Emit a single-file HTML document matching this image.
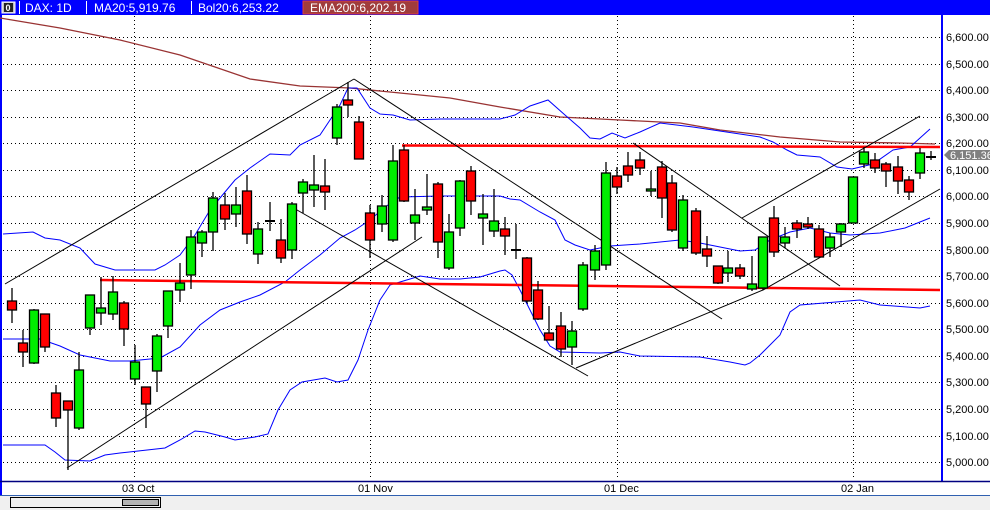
<!DOCTYPE html>
<html><head><meta charset="utf-8"><style>
html,body{margin:0;padding:0;background:#fff;width:990px;height:510px;overflow:hidden}
svg{display:block}
text{font-family:"Liberation Sans",sans-serif}
</style></head><body>
<svg width="990" height="510" viewBox="0 0 990 510" xmlns="http://www.w3.org/2000/svg">
<rect x="0" y="0" width="990" height="510" fill="#fff"/>
<!-- header -->
<rect x="0" y="0" width="990" height="15" fill="#0000ff"/>
<rect x="2" y="2" width="13" height="11" fill="#c0c0c0" stroke="#fff" stroke-width="1"/>
<rect x="4" y="3" width="9" height="9" fill="#222"/>
<text x="5.5" y="11" font-size="9" fill="#fff" font-weight="bold">0</text>
<line x1="19.5" y1="1" x2="19.5" y2="14" stroke="#fff"/>
<line x1="86.5" y1="1" x2="86.5" y2="14" stroke="#fff"/>
<line x1="191.5" y1="1" x2="191.5" y2="14" stroke="#fff"/>
<rect x="303" y="1" width="115" height="13" fill="#a03c3c" stroke="#e04040"/>
<text x="25" y="12" font-size="12" fill="#fff">DAX: 1D</text>
<text x="94" y="12" font-size="12" fill="#fff">MA20:5,919.76</text>
<text x="198" y="12" font-size="12" fill="#fff">Bol20:6,253.22</text>
<text x="310" y="12" font-size="12" fill="#fff">EMA200:6,202.19</text>
<!-- borders -->
<line x1="1" y1="15" x2="1" y2="495" stroke="#0000ff" stroke-width="2"/>
<line x1="942" y1="15" x2="942" y2="481" stroke="#0000ff" stroke-width="2"/>
<line x1="0" y1="481.5" x2="990" y2="481.5" stroke="#000080" stroke-width="1.5"/>
<rect x="0" y="495" width="990" height="15" fill="#f0f0f0"/>
<line x1="0" y1="495.5" x2="990" y2="495.5" stroke="#3060b0"/>
<rect x="10.5" y="497.5" width="150" height="10" fill="#f0f0f0" stroke="#000"/>
<rect x="122.5" y="499.5" width="36" height="6" fill="#b4b4b4" stroke="#000"/>
<!-- grid -->
<g stroke="#000" stroke-width="1" stroke-dasharray="1 3">
<line x1="3" y1="37.5" x2="940" y2="37.5"/><line x1="3" y1="64.5" x2="940" y2="64.5"/>
<line x1="3" y1="90.5" x2="940" y2="90.5"/><line x1="3" y1="117.5" x2="940" y2="117.5"/>
<line x1="3" y1="143.5" x2="940" y2="143.5"/><line x1="3" y1="170.5" x2="940" y2="170.5"/>
<line x1="3" y1="196.5" x2="940" y2="196.5"/><line x1="3" y1="223.5" x2="940" y2="223.5"/>
<line x1="3" y1="250.5" x2="940" y2="250.5"/><line x1="3" y1="276.5" x2="940" y2="276.5"/>
<line x1="3" y1="303.5" x2="940" y2="303.5"/><line x1="3" y1="329.5" x2="940" y2="329.5"/>
<line x1="3" y1="356.5" x2="940" y2="356.5"/><line x1="3" y1="382.5" x2="940" y2="382.5"/>
<line x1="3" y1="409.5" x2="940" y2="409.5"/><line x1="3" y1="436.5" x2="940" y2="436.5"/>
<line x1="3" y1="462.5" x2="940" y2="462.5"/>
<line x1="134.5" y1="16" x2="134.5" y2="480"/><line x1="370.5" y1="16" x2="370.5" y2="480"/>
<line x1="617.5" y1="16" x2="617.5" y2="480"/><line x1="853.5" y1="16" x2="853.5" y2="480"/>
</g>
<!-- axis labels -->
<g font-size="11" fill="#000">
<text x="946" y="41">6,600.00</text><text x="946" y="68">6,500.00</text><text x="946" y="94">6,400.00</text>
<text x="946" y="121">6,300.00</text><text x="946" y="147">6,200.00</text><text x="946" y="174">6,100.00</text>
<text x="946" y="200">6,000.00</text><text x="946" y="227">5,900.00</text><text x="946" y="254">5,800.00</text>
<text x="946" y="280">5,700.00</text><text x="946" y="307">5,600.00</text><text x="946" y="333">5,500.00</text>
<text x="946" y="360">5,400.00</text><text x="946" y="386">5,300.00</text><text x="946" y="413">5,200.00</text>
<text x="946" y="440">5,100.00</text><text x="946" y="466">5,000.00</text>
<text x="122" y="492">03 Oct</text><text x="358" y="492">01 Nov</text>
<text x="604" y="492">01 Dec</text><text x="841" y="492">02 Jan</text>
</g>
<polygon points="944,155 949,150 990,150 990,160 949,160" fill="#808080"/>
<text x="950" y="159" font-size="11" fill="#fff">6,151.36</text>
<!-- EMA -->
<polyline fill="none" stroke="#993333" stroke-width="1.3" points="0,18 60,28 120,40 180,55 250,79 300,86 350,88 400,93 450,98 500,107 560,117 620,120 680,123 720,130 780,137 840,142 900,143 935,144"/>
<!-- bands -->
<g fill="none" stroke="#0000ff" stroke-width="1">
<polyline points="3,234 33,232 45,238 60,240 80,248 95,264 115,270 155,270 165,265 180,255 195,235 210,210 225,192 235,180 250,168 270,154 290,155 300,145 320,135 330,120 340,105 348,88 357,88 370,108 380,114 393,115 410,120 440,119 500,119 515,115 530,106 548,100 565,115 580,128 590,138 600,139 612,133 625,138 640,132 660,123 693,127 760,137 773,142 787,150 797,155 820,157 837,167 852,169 873,164 893,150 910,147 920,138 930,129"/>
<polyline points="3,339 40,339 60,346 80,355 110,361 130,361 160,358 180,347 200,325 220,310 240,302 260,295 285,282 300,270 320,255 340,238 355,230 370,220 385,207 400,197 440,196 500,196 510,199 520,200 540,212 555,220 565,240 575,245 590,250 610,246 640,244 680,240 700,243 720,247 740,251 755,250 770,240 790,232 810,228 830,233 850,235 880,233 905,228 920,222 930,218"/>
<polyline points="3,445 45,445 55,452 65,460 90,461 105,455 120,453 165,448 180,440 195,431 205,432 225,437 235,440 255,437 268,434 278,410 290,390 302,382 325,378 337,382 348,380 358,360 368,330 380,300 390,285 400,282 420,276 440,279 460,279 480,277 500,271 505,270 512,275 520,290 530,310 540,330 550,346 560,352 600,353 620,352 640,356 700,357 730,362 745,365 750,363 760,355 770,345 780,335 790,312 800,305 860,300 880,305 920,308 930,306"/>
</g>
<!-- red lines -->
<line x1="402" y1="145.5" x2="940" y2="147" stroke="#ff0000" stroke-width="2.5"/>
<line x1="100" y1="280" x2="940" y2="290" stroke="#ff0000" stroke-width="2.5"/>
<!-- trend lines -->
<g stroke="#000" stroke-width="1" fill="none">
<line x1="5" y1="284" x2="354" y2="79"/>
<line x1="67" y1="468" x2="422" y2="237"/>
<line x1="354" y1="79" x2="722" y2="319"/>
<line x1="290" y1="206" x2="588" y2="376"/>
<polyline points="576,368 763,290 940,189"/>
<line x1="742" y1="218" x2="920" y2="116"/>
<line x1="633" y1="143" x2="840" y2="286"/>
</g>
<!-- candles -->
<g stroke="#000" stroke-width="1.3">
<line x1="12" y1="288" x2="12" y2="323"/><rect x="7.5" y="301" width="9" height="9" fill="#f00"/>
<line x1="23" y1="330" x2="23" y2="367"/><rect x="18.5" y="343" width="9" height="9" fill="#f00"/>
<line x1="34" y1="309" x2="34" y2="364"/><rect x="29.5" y="310" width="9" height="53" fill="#00ee00"/>
<line x1="45" y1="314" x2="45" y2="352"/><rect x="40.5" y="314" width="9" height="33" fill="#f00"/>
<line x1="56" y1="385" x2="56" y2="427"/><rect x="51.5" y="393" width="9" height="25" fill="#f00"/>
<line x1="68" y1="401" x2="68" y2="470"/><rect x="63.5" y="401" width="9" height="9" fill="#f00"/>
<line x1="79" y1="352" x2="79" y2="430"/><rect x="74.5" y="370" width="9" height="58" fill="#00ee00"/>
<line x1="90" y1="295" x2="90" y2="335"/><rect x="85.5" y="295" width="9" height="33" fill="#00ee00"/>
<line x1="101" y1="277" x2="101" y2="325"/><rect x="96.5" y="308" width="9" height="5" fill="#00ee00"/>
<line x1="113" y1="276" x2="113" y2="320"/><rect x="108.5" y="292" width="9" height="22" fill="#00ee00"/>
<line x1="124" y1="301" x2="124" y2="346"/><rect x="119.5" y="303" width="9" height="26" fill="#f00"/>
<line x1="135" y1="345" x2="135" y2="385"/><rect x="130.5" y="362" width="9" height="17" fill="#00ee00"/>
<line x1="146" y1="387" x2="146" y2="428"/><rect x="141.5" y="387" width="9" height="17" fill="#f00"/>
<line x1="157" y1="334" x2="157" y2="392"/><rect x="152.5" y="336" width="9" height="35" fill="#00ee00"/>
<line x1="168" y1="291" x2="168" y2="338"/><rect x="163.5" y="291" width="9" height="35" fill="#00ee00"/>
<line x1="180" y1="263" x2="180" y2="302"/><rect x="175.5" y="283" width="9" height="7" fill="#00ee00"/>
<line x1="191" y1="230" x2="191" y2="289"/><rect x="186.5" y="237" width="9" height="38" fill="#00ee00"/>
<line x1="202" y1="230" x2="202" y2="257"/><rect x="197.5" y="232" width="9" height="11" fill="#00ee00"/>
<line x1="213" y1="192" x2="213" y2="251"/><rect x="208.5" y="198" width="9" height="34" fill="#00ee00"/>
<line x1="225" y1="193" x2="225" y2="230"/><rect x="220.5" y="205" width="9" height="14" fill="#f00"/>
<line x1="236" y1="187" x2="236" y2="227"/><rect x="231.5" y="205" width="9" height="9" fill="#00ee00"/>
<line x1="247" y1="175" x2="247" y2="244"/><rect x="242.5" y="191" width="9" height="43" fill="#f00"/>
<line x1="258" y1="222" x2="258" y2="264"/><rect x="253.5" y="229" width="9" height="25" fill="#00ee00"/>
<line x1="270" y1="202" x2="270" y2="231"/><line x1="265" y1="221" x2="275" y2="221" stroke-width="2"/>
<line x1="281" y1="219" x2="281" y2="263"/><rect x="276.5" y="240" width="9" height="18" fill="#f00"/>
<line x1="292" y1="202" x2="292" y2="259"/><rect x="287.5" y="204" width="9" height="46" fill="#00ee00"/>
<line x1="303" y1="179" x2="303" y2="213"/><rect x="298.5" y="182" width="9" height="11" fill="#00ee00"/>
<line x1="314" y1="155" x2="314" y2="207"/><rect x="309.5" y="185" width="9" height="5" fill="#00ee00"/>
<line x1="325" y1="159" x2="325" y2="210"/><rect x="320.5" y="186" width="9" height="6" fill="#f00"/>
<line x1="337" y1="104" x2="337" y2="145"/><rect x="332.5" y="107" width="9" height="31" fill="#00ee00"/>
<line x1="348" y1="82" x2="348" y2="117"/><rect x="343.5" y="100" width="9" height="5" fill="#f00"/>
<line x1="359" y1="116" x2="359" y2="159"/><rect x="354.5" y="122" width="9" height="37" fill="#f00"/>
<line x1="370" y1="205" x2="370" y2="258"/><rect x="365.5" y="213" width="9" height="27" fill="#f00"/>
<line x1="382" y1="195" x2="382" y2="232"/><rect x="377.5" y="206" width="9" height="18" fill="#00ee00"/>
<line x1="393" y1="145" x2="393" y2="242"/><rect x="388.5" y="161" width="9" height="79" fill="#00ee00"/>
<line x1="404" y1="145" x2="404" y2="202"/><rect x="399.5" y="150" width="9" height="51" fill="#f00"/>
<line x1="415" y1="189" x2="415" y2="240"/><rect x="410.5" y="215" width="9" height="8" fill="#00ee00"/>
<line x1="427" y1="174" x2="427" y2="215"/><rect x="422.5" y="207" width="9" height="3" fill="#00ee00"/>
<line x1="438" y1="182" x2="438" y2="258"/><rect x="433.5" y="184" width="9" height="58" fill="#f00"/>
<line x1="449" y1="214" x2="449" y2="270"/><rect x="444.5" y="232" width="9" height="36" fill="#00ee00"/>
<line x1="460" y1="180" x2="460" y2="236"/><rect x="455.5" y="181" width="9" height="47" fill="#00ee00"/>
<line x1="471" y1="166" x2="471" y2="215"/><rect x="466.5" y="171" width="9" height="30" fill="#f00"/>
<line x1="483" y1="194" x2="483" y2="245"/><rect x="478.5" y="214" width="9" height="4" fill="#00ee00"/>
<line x1="494" y1="189" x2="494" y2="237"/><rect x="489.5" y="221" width="9" height="10" fill="#00ee00"/>
<line x1="505" y1="217" x2="505" y2="255"/><rect x="500.5" y="229" width="9" height="7" fill="#f00"/>
<line x1="516" y1="224" x2="516" y2="259"/><line x1="511" y1="250" x2="521" y2="250" stroke-width="2"/>
<line x1="527" y1="257" x2="527" y2="303"/><rect x="522.5" y="258" width="9" height="43" fill="#f00"/>
<line x1="538" y1="281" x2="538" y2="320"/><rect x="533.5" y="290" width="9" height="29" fill="#f00"/>
<line x1="549" y1="306" x2="549" y2="340"/><rect x="544.5" y="333" width="9" height="7" fill="#f00"/>
<line x1="561" y1="312" x2="561" y2="357"/><rect x="556.5" y="326" width="9" height="23" fill="#f00"/>
<line x1="572" y1="321" x2="572" y2="365"/><rect x="567.5" y="331" width="9" height="16" fill="#00ee00"/>
<line x1="583" y1="262" x2="583" y2="311"/><rect x="578.5" y="265" width="9" height="44" fill="#00ee00"/>
<line x1="595" y1="245" x2="595" y2="280"/><rect x="590.5" y="251" width="9" height="19" fill="#00ee00"/>
<line x1="606" y1="162" x2="606" y2="270"/><rect x="601.5" y="173" width="9" height="92" fill="#00ee00"/>
<line x1="617" y1="167" x2="617" y2="194"/><rect x="612.5" y="176" width="9" height="11" fill="#f00"/>
<line x1="628" y1="152" x2="628" y2="182"/><rect x="623.5" y="166" width="9" height="9" fill="#f00"/>
<line x1="640" y1="152" x2="640" y2="175"/><rect x="635.5" y="160" width="9" height="8" fill="#f00"/>
<line x1="651" y1="171" x2="651" y2="196"/><rect x="646.5" y="189" width="9" height="2" fill="#00ee00"/>
<line x1="662" y1="161" x2="662" y2="218"/><rect x="657.5" y="167" width="9" height="31" fill="#f00"/>
<line x1="672" y1="175" x2="672" y2="232"/><rect x="667.5" y="183" width="9" height="47" fill="#f00"/>
<line x1="683" y1="195" x2="683" y2="251"/><rect x="678.5" y="200" width="9" height="48" fill="#00ee00"/>
<line x1="696" y1="208" x2="696" y2="255"/><rect x="691.5" y="211" width="9" height="42" fill="#f00"/>
<line x1="707" y1="236" x2="707" y2="267"/><rect x="702.5" y="249" width="9" height="7" fill="#f00"/>
<line x1="718" y1="266" x2="718" y2="284"/><rect x="713.5" y="266" width="9" height="17" fill="#f00"/>
<line x1="728" y1="251" x2="728" y2="282"/><rect x="723.5" y="268" width="9" height="5" fill="#00ee00"/>
<line x1="740" y1="264" x2="740" y2="279"/><rect x="735.5" y="268" width="9" height="8" fill="#f00"/>
<line x1="752" y1="256" x2="752" y2="291"/><rect x="747.5" y="284" width="9" height="5" fill="#00ee00"/>
<line x1="763" y1="237" x2="763" y2="290"/><rect x="758.5" y="237" width="9" height="51" fill="#00ee00"/>
<line x1="774" y1="206" x2="774" y2="257"/><rect x="769.5" y="218" width="9" height="34" fill="#f00"/>
<line x1="785" y1="227" x2="785" y2="248"/><rect x="780.5" y="237" width="9" height="6" fill="#00ee00"/>
<line x1="797" y1="220" x2="797" y2="238"/><rect x="792.5" y="223" width="9" height="6" fill="#f00"/>
<line x1="808" y1="217" x2="808" y2="229"/><rect x="803.5" y="224" width="9" height="3" fill="#f00"/>
<line x1="819" y1="225" x2="819" y2="257"/><rect x="814.5" y="229" width="9" height="28" fill="#f00"/>
<line x1="830" y1="233" x2="830" y2="257"/><rect x="825.5" y="237" width="9" height="11" fill="#00ee00"/>
<line x1="841" y1="223" x2="841" y2="247"/><rect x="836.5" y="224" width="9" height="8" fill="#00ee00"/>
<line x1="853" y1="177" x2="853" y2="223"/><rect x="848.5" y="177" width="9" height="46" fill="#00ee00"/>
<line x1="864" y1="147" x2="864" y2="168"/><rect x="859.5" y="152" width="9" height="12" fill="#00ee00"/>
<line x1="875" y1="153" x2="875" y2="173"/><rect x="870.5" y="160" width="9" height="8" fill="#f00"/>
<line x1="886" y1="162" x2="886" y2="187"/><rect x="881.5" y="164" width="9" height="7" fill="#f00"/>
<line x1="898" y1="156" x2="898" y2="194"/><rect x="893.5" y="167" width="9" height="14" fill="#f00"/>
<line x1="909" y1="176" x2="909" y2="200"/><rect x="904.5" y="180" width="9" height="12" fill="#f00"/>
<line x1="920" y1="148" x2="920" y2="179"/><rect x="915.5" y="153" width="9" height="20" fill="#00ee00"/>
<line x1="931" y1="151" x2="931" y2="160"/><line x1="926" y1="157" x2="936" y2="157" stroke-width="2"/>
</g>
</svg>
</body></html>
